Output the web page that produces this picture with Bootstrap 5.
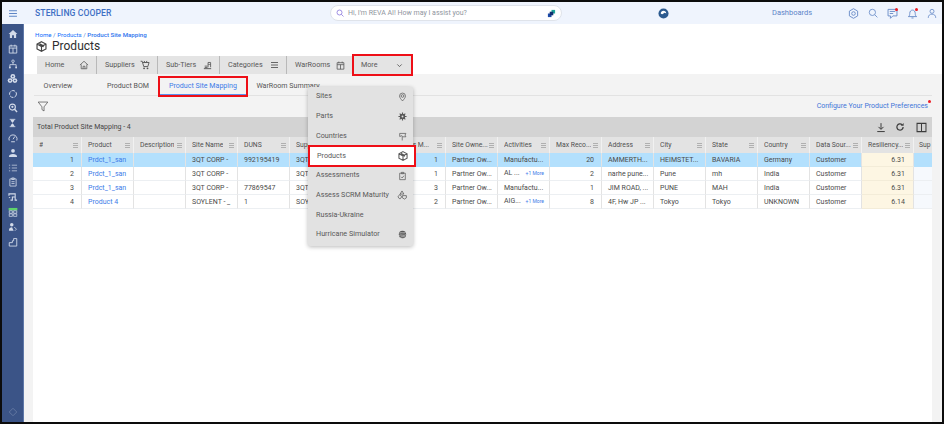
<!DOCTYPE html>
<html lang="en">
<head>
<meta charset="utf-8">
<title>Products</title>
<link href="https://cdn.jsdelivr.net/npm/bootstrap@5.3.0/dist/css/bootstrap.min.css" rel="stylesheet">
<style>
html,body{margin:0;height:424px;overflow:hidden;background:#f7f7f7;font-family:Roboto,"Liberation Sans",sans-serif;color:#4a4a4a}
svg{display:block;flex:none}
a{text-decoration:none}
.app-frame{width:944px;height:424px;border:2px solid #0c0c0c;overflow:hidden;background:#fff}
.top-strip{height:22px;background:#eff4fd}
.burger-cell{width:22px;color:#5f86c6}
.brand-name{width:108px;margin-left:11px;font-size:8.6px;font-weight:500;color:#3f6fc4;letter-spacing:.1px;white-space:nowrap}
.ai-search{width:232px;height:16px;margin-left:187px;padding:0 5px;background:#fff;border:1px solid #dfe3ea;border-radius:8px;font-size:7px;color:#8f959e}
.ai-logo{margin-left:96px;width:12px}
.dash-link{width:40px;margin-left:102px;font-size:7.5px;color:#5d84c8;white-space:nowrap}
.top-icons{margin-left:36px;gap:9px;color:#6d8fc9}
.badge-wrap{position:relative;width:11px;height:11px}
.red-dot{position:absolute;width:3px;height:3px;background:#ec1c24;border-radius:50%;right:0;top:0}
.side-rail{width:22px;background:#3b5487;border-right:1px solid #5f78a8;padding-top:3px;color:#d3dbea;overflow:hidden}
.rail-icon{height:14.8px;width:100%}
.rail-low{margin-top:auto;opacity:.28;padding-bottom:6px}
.page-head{height:50px;padding:8px 0 0 11px;background:#fff}
.crumbs{height:7px;line-height:7px;font-size:6.15px;color:#4f7fd8;white-space:nowrap}
.crumbs b{font-weight:500;color:#2e73ee}
.page-title{height:15px;font-size:12px;line-height:15px;color:#2e2e2e;gap:5px;padding-left:1px}
.main-tabs{height:18px;margin:2px 0 0 2px}
.main-tab{height:18px;background:#e4e4e4;border-right:1px solid #b9b9b9;padding:0 7px 0 8px;font-size:7.2px;color:#575757;white-space:nowrap}
.main-tab.mt-more{width:57px;margin-left:2px;border:0;outline:2px solid #ee0f17;padding:0 8px 0 7px;position:relative;z-index:3}
.gray-zone{background:#f3f3f3}
.sub-tabs{height:18px;margin:4px 0 0 10px;width:898px;border-bottom:1px solid #e2e2e2}
.sub-tab{height:18px;font-size:7.1px;color:#555;border-bottom:1px solid #e2e2e2;white-space:nowrap}
.sub-tab.st-first{padding-right:12px;margin-right:4px}
.sub-tab.st-on{outline:2px solid #ee0f17;outline-offset:0;color:#3d7be8;margin:0 4px 0 2px;height:17px;border-bottom:1px solid #5b90ee;position:relative}
.filter-row{height:21px;margin-left:13px;width:895px;padding-right:4px}
.pref-link{position:relative;font-size:7px;color:#3f76d8;white-space:nowrap}
.pref-link i{position:absolute;top:-1px;right:-3px;width:3px;height:3px;background:#ec1c24;border-radius:50%}
.grid-pane{margin-left:9px;width:899px;background:#fff}
.grid-bar{height:20px;background:#d3d3d3;padding:0 5px 0 4px;font-size:7px;color:#444}
.grid-tools{gap:9px;color:#3c3c3c}
.grid-tools svg:last-child{margin-left:2px}
.site-grid{table-layout:fixed;width:899px;border-collapse:separate;border-spacing:0;margin:0}
.site-grid th,.site-grid td{padding:0 4px 0 6px;font-size:7px;font-weight:400;white-space:nowrap;overflow:hidden;color:#4a4a4a;border-right:1.5px solid #e3e3e3;border-bottom:1px solid #eceff2;text-overflow:ellipsis;background:#fff;vertical-align:middle}
.site-grid th{height:16px;font-size:6.8px;padding-right:3px;background:#e3e3e3;border-right:1.5px solid #f1f1f1;border-bottom:0;color:#505050}
.site-grid th.th-last{text-overflow:clip;padding-left:5px;padding-right:0;border-right:0}
.site-grid td{height:14px;line-height:12px}
.site-grid td.td-last{background:#f6f9fd;border-right:0}
.head-cell{justify-content:space-between;gap:1px}
.head-cell span{overflow:hidden;text-overflow:ellipsis}
.head-lines{width:5px;height:5px;flex:none;border-top:1px solid #b0b0b0;border-bottom:1px solid #b0b0b0;position:relative}
.head-lines::after{content:"";position:absolute;left:0;right:0;top:1px;height:1px;background:#b0b0b0}
.site-grid td.num{text-align:right;padding-right:7px}
.site-grid td a{color:#3d7be8}
.site-grid tr.row-on td,.site-grid tr.row-on td.td-last{background:#b3e0fd;border-bottom-color:#b3e0fd}
.site-grid td.resil,.site-grid tr.row-on td.resil{background:#fdf6e3;border-bottom-color:#f3ecd8;text-align:right;padding-right:8px}
.more-tag{font-size:5px;color:#3d7be8;float:right;line-height:13px;margin-right:1px}
.more-wrap{position:relative}
.more-menu.dropdown-menu{position:absolute;display:block;left:-44px;top:31px;width:105px;min-width:0;height:159px;padding:0;margin:0;border:0;border-radius:2px;background:#e2e2e2;box-shadow:0 1px 4px rgba(0,0,0,.28);z-index:2}
.more-menu .dropdown-item{height:19.7px;padding:0 6px 0 8px;font-size:7.2px;color:#585858;white-space:nowrap;position:relative}
.more-menu .dropdown-item.mi-on{background:#fff;outline:2px solid #ee0f17;outline-offset:-1px;width:106px;margin-left:1px;padding:0 7px 0 8px}
</style>
</head>
<body>
<svg width="0" height="0" style="position:absolute">
<defs>
<symbol id="i-cube" viewBox="0 0 16 16"><path d="M8 1 14.500 4.500V11.500L8 15 1.500 11.500V4.500Z M1.500 4.500 8 8 14.500 4.500 M8 8V15" fill="none" stroke="currentColor" stroke-width="1.700"/><path d="M4.800 2.800 11.200 6.200 11.200 9 8 8 4.800 6.200Z" fill="currentColor"/></symbol>
<symbol id="i-home" viewBox="0 0 16 16"><path d="M1.500 8 8 2l6.500 6M3.500 7v7h9V7M6.500 14v-4h3v4" fill="none" stroke="currentColor" stroke-width="1.200"/></symbol>
<symbol id="i-homefill" viewBox="0 0 16 16"><path d="M8 1.500 15 8h-2v6.500H9.500V10h-3v4.500H3V8H1Z" fill="currentColor"/></symbol>
<symbol id="i-cal" viewBox="0 0 16 16"><path d="M2 3h12v11.500H2ZM2 6.500h12M5 1v3M11 1v3M8 6.500v8" fill="none" stroke="currentColor" stroke-width="1.400"/></symbol>
<symbol id="i-org" viewBox="0 0 16 16"><circle cx="8" cy="3.500" r="2" fill="none" stroke="currentColor" stroke-width="1.300"/><path d="M8 5.500V9M3 13V9h10v4" fill="none" stroke="currentColor" stroke-width="1.300"/><circle cx="3" cy="13.500" r="1.500" fill="currentColor"/><circle cx="13" cy="13.500" r="1.500" fill="currentColor"/></symbol>
<symbol id="i-bio" viewBox="0 0 16 16"><circle cx="8.500" cy="5" r="3.500" fill="currentColor"/><circle cx="4.500" cy="11" r="3.500" fill="currentColor"/><circle cx="11.500" cy="11" r="3.500" fill="currentColor"/><circle cx="4.500" cy="11" r="1.200" fill="#3b5487"/><circle cx="11.500" cy="11" r="1.200" fill="#3b5487"/><circle cx="8.500" cy="5" r="1.200" fill="#3b5487"/></symbol>
<symbol id="i-ring" viewBox="0 0 16 16"><circle cx="8" cy="8" r="5.500" fill="none" stroke="currentColor" stroke-width="1.600" stroke-dasharray="6 1.600"/></symbol>
<symbol id="i-searchuser" viewBox="0 0 16 16"><circle cx="7" cy="6.500" r="4.800" fill="none" stroke="currentColor" stroke-width="1.800"/><circle cx="7" cy="6" r="1.800" fill="currentColor"/><path d="M10.500 10 14.500 14.500" stroke="currentColor" stroke-width="2.200"/></symbol>
<symbol id="i-hour" viewBox="0 0 16 16"><path d="M3 1.500h10M3 14.500h10" stroke="currentColor" stroke-width="1.500"/><path d="M4.500 2h7c0 3-3.500 4.500-3.500 6s3.500 3 3.500 6h-7c0-3 3.500-4.500 3.500-6S4.500 5 4.500 2Z" fill="currentColor"/></symbol>
<symbol id="i-gauge" viewBox="0 0 16 16"><path d="M2 12a6.500 6.500 0 1 1 12 0" fill="none" stroke="currentColor" stroke-width="1.500"/><path d="M8 10 11 5.500M5 14h6" stroke="currentColor" stroke-width="1.500"/></symbol>
<symbol id="i-usercard" viewBox="0 0 16 16"><circle cx="8" cy="4.500" r="3" fill="currentColor"/><path d="M1.500 14.500c0-4 2.500-5 6.500-5s6.500 1 6.500 5Z" fill="currentColor"/></symbol>
<symbol id="i-list" viewBox="0 0 16 16"><path d="M1.500 3.500h2M6 3.500h8.500M1.500 8h2M6 8h8.500M1.500 12.500h2M6 12.500h8.500" stroke="currentColor" stroke-width="1.500" opacity=".75"/></symbol>
<symbol id="i-clip" viewBox="0 0 16 16"><path d="M3 3h10v11.500H3ZM6 1.500h4V4H6ZM5.500 7.500h5M5.500 10.500h5" fill="none" stroke="currentColor" stroke-width="1.300"/></symbol>
<symbol id="i-clipcheck" viewBox="0 0 16 16"><path d="M3 3h10v11.500H3ZM6 1.500h4V4H6ZM5.500 9.500 7.500 11.500 10.500 7.500" fill="none" stroke="currentColor" stroke-width="1.300"/></symbol>
<symbol id="i-swap" viewBox="0 0 16 16"><path d="M1.500 6V3h10v10h3M11.500 8H7v5H4" fill="none" stroke="currentColor" stroke-width="1.700"/><path d="M1 8h3l-1.500 2Z" fill="currentColor"/></symbol>
<symbol id="i-shop" viewBox="0 0 16 16"><path d="M1 1.500h14v4H1Z" fill="#5fd36b"/><path d="M2 6h5v4H2ZM9 6h5v4H9ZM2 11h5v4H2ZM9 11h5v4H9Z" fill="none" stroke="currentColor" stroke-width="1.200"/></symbol>
<symbol id="i-person" viewBox="0 0 16 16"><circle cx="6" cy="4.500" r="2.800" fill="currentColor"/><path d="M1.500 14c0-4 2-5.500 5-5.500L9 14Z" fill="currentColor"/><path d="M10 8l3.500 3.500-2.500 2.500" fill="none" stroke="currentColor" stroke-width="1.300"/></symbol>
<symbol id="i-steps" viewBox="0 0 16 16"><path d="M2 14.500V9h5V6h2V2.500h5v12Z" fill="none" stroke="currentColor" stroke-width="1.400"/></symbol>
<symbol id="i-diamond" viewBox="0 0 16 16"><path d="M8 2 14 8 8 14 2 8Z" fill="none" stroke="currentColor" stroke-width="1.400"/></symbol>
<symbol id="i-cart" viewBox="0 0 16 16"><path d="M1 2h2.500L6 10.500h6.500L14.500 4H4.500M6.500 1.500 8 4M11 1.500 10 4" fill="none" stroke="currentColor" stroke-width="1.500"/><circle cx="6.500" cy="13.300" r="1.500" fill="currentColor"/><circle cx="12" cy="13.300" r="1.500" fill="currentColor"/></symbol>
<symbol id="i-tier" viewBox="0 0 16 16"><path d="M1.500 14.500h13" stroke="currentColor" stroke-width="1.700"/><path d="M3 12.500h5M3 10h5" stroke="currentColor" stroke-width="1.500"/><path d="M9 12V3.500h4.500V12" fill="none" stroke="currentColor" stroke-width="1.500"/><path d="M9 7h4.500" stroke="currentColor" stroke-width="1.200"/></symbol>
<symbol id="i-bars" viewBox="0 0 16 16"><path d="M1 3h14M1 8h14M1 13h14" stroke="currentColor" stroke-width="1.800"/></symbol>
<symbol id="i-chev" viewBox="0 0 16 16"><path d="M3 5.500 8 10.500 13 5.500" fill="none" stroke="currentColor" stroke-width="2"/></symbol>
<symbol id="i-funnel" viewBox="0 0 16 16"><path d="M1 1.500h14L9.500 8.500v6l-3-2v-4Z" fill="none" stroke="currentColor" stroke-width="1.100"/></symbol>
<symbol id="i-down" viewBox="0 0 16 16"><path d="M8 1v9.500M4 7l4 4 4-4M2 14.500h12" fill="none" stroke="currentColor" stroke-width="1.600"/></symbol>
<symbol id="i-refresh" viewBox="0 0 16 16"><path d="M13 8a5 5 0 1 1-1.600-3.700" fill="none" stroke="currentColor" stroke-width="2"/><path d="M13.800 1.500v4.500H9.300Z" fill="currentColor"/></symbol>
<symbol id="i-cols" viewBox="0 0 16 16"><path d="M1.500 2h13v12h-13ZM8 2v12" fill="none" stroke="currentColor" stroke-width="1.500"/></symbol>
<symbol id="i-gear" viewBox="0 0 16 16"><path d="M8 1 14 4.500v7L8 15 2 11.500v-7Z" fill="none" stroke="currentColor" stroke-width="1.400"/><circle cx="8" cy="8" r="2.600" fill="none" stroke="currentColor" stroke-width="1.400"/></symbol>
<symbol id="i-mag" viewBox="0 0 16 16"><circle cx="7" cy="7" r="5" fill="none" stroke="currentColor" stroke-width="1.400"/><path d="M10.800 10.800 15 15" stroke="currentColor" stroke-width="1.400"/></symbol>
<symbol id="i-chat" viewBox="0 0 16 16"><path d="M1.500 2h13v9.500h-6L5 15v-3.500H1.500ZM4 5h8M4 8h5" fill="none" stroke="currentColor" stroke-width="1.400"/></symbol>
<symbol id="i-bell" viewBox="0 0 16 16"><path d="M2 12.500c1.500-1 2-2 2-4.500 0-3 1.700-5 4-5s4 2 4 5c0 2.500.5 3.500 2 4.500ZM6.500 14.500h3" fill="none" stroke="currentColor" stroke-width="1.400"/></symbol>
<symbol id="i-user" viewBox="0 0 16 16"><circle cx="8" cy="4.500" r="3.200" fill="none" stroke="currentColor" stroke-width="1.400"/><path d="M2 15c0-4 2.500-6 6-6s6 2 6 6" fill="none" stroke="currentColor" stroke-width="1.400"/></symbol>
<symbol id="i-pin" viewBox="0 0 16 16"><path d="M8 15C5 11.500 2.800 9 2.800 6.200a5.200 5.200 0 0 1 10.400 0C13.200 9 11 11.500 8 15Z" fill="none" stroke="currentColor" stroke-width="1.300"/><circle cx="8" cy="6.200" r="2.400" fill="none" stroke="currentColor" stroke-width="1.300"/></symbol>
<symbol id="i-part" viewBox="0 0 16 16"><circle cx="8" cy="8" r="4.800" fill="currentColor"/><path d="M8 .8v14.400M.8 8h14.400M3 3l10 10M13 3 3 13" stroke="currentColor" stroke-width="2"/><circle cx="8" cy="8" r="1.700" fill="#e2e2e2"/></symbol>
<symbol id="i-flag" viewBox="0 0 16 16"><path d="M3 2.500h11l-1.500 3 1.500 3H8L7 6.500 3 8ZM7.500 8.500V15" fill="none" stroke="currentColor" stroke-width="1.300"/></symbol>
<symbol id="i-assess" viewBox="0 0 16 16"><path d="M8 1.500 11 6.500H5ZM1.500 11l3-4 3 4-3 3.500ZM8.500 9h6.500v3.500l-3 2-3.500-2Z" fill="none" stroke="currentColor" stroke-width="1.200"/></symbol>
<symbol id="i-storm" viewBox="0 0 16 16"><circle cx="8" cy="8" r="6.500" fill="currentColor"/><path d="M2.500 5.500C7 4 10 6 13.500 4.500M2 9.500c4-2 8 1.500 12-1M4 13c3-1.500 5-1 8-1" fill="none" stroke="#e2e2e2" stroke-width="1.200"/></symbol>
</defs>
</svg>

<div class="app-frame d-flex flex-column">
  <header class="top-strip d-flex align-items-center flex-none">
    <div class="burger-cell d-flex justify-content-center"><svg width="10" height="9"><use href="#i-bars"/></svg></div>
    <div class="brand-name">STERLING COOPER</div>
    <div class="ai-search d-flex align-items-center gap-1">
      <svg width="8" height="8" style="color:#7a63d8"><use href="#i-mag"/></svg>
      <span class="flex-grow-1">Hi, I'm REVA AI! How may I assist you?</span>
      <svg width="9" height="9" viewBox="0 0 10 10"><path d="M5 1h4v4H5Z" fill="#1fa59a"/><path d="M1 5h4v4H1Z" fill="#1c4aa8"/><path d="M3 3h4v4H3Z" fill="#12306f"/></svg>
    </div>
    <div class="ai-logo"><svg width="11" height="11" viewBox="0 0 12 12"><circle cx="6" cy="6" r="5.500" fill="#2c5a8f"/><path d="M3 6c0-2 1.500-3 3-3s3 1 3 3c-1.500-1-2-1-3 0s-2 1-3 0Z" fill="#fff"/></svg></div>
    <a class="dash-link" href="#">Dashboards</a>
    <div class="top-icons d-flex align-items-center">
      <svg width="11" height="11"><use href="#i-gear"/></svg>
      <svg width="10" height="10"><use href="#i-mag"/></svg>
      <span class="badge-wrap"><svg width="11" height="11"><use href="#i-chat"/></svg><i class="red-dot"></i></span>
      <span class="badge-wrap"><svg width="11" height="11"><use href="#i-bell"/></svg><i class="red-dot"></i></span>
      <svg width="10" height="11"><use href="#i-user"/></svg>
    </div>
  </header>

  <div class="d-flex flex-grow-1" style="min-height:0">
    <nav class="side-rail d-flex flex-column flex-none">
      <div class="rail-icon d-flex align-items-center justify-content-center"><svg width="10" height="10"><use href="#i-homefill"/></svg></div>
      <div class="rail-icon d-flex align-items-center justify-content-center"><svg width="10" height="10"><use href="#i-cal"/></svg></div>
      <div class="rail-icon d-flex align-items-center justify-content-center"><svg width="10" height="10"><use href="#i-org"/></svg></div>
      <div class="rail-icon d-flex align-items-center justify-content-center"><svg width="11" height="11"><use href="#i-bio"/></svg></div>
      <div class="rail-icon d-flex align-items-center justify-content-center"><svg width="10" height="10"><use href="#i-ring"/></svg></div>
      <div class="rail-icon d-flex align-items-center justify-content-center"><svg width="10" height="10"><use href="#i-searchuser"/></svg></div>
      <div class="rail-icon d-flex align-items-center justify-content-center"><svg width="9" height="10"><use href="#i-hour"/></svg></div>
      <div class="rail-icon d-flex align-items-center justify-content-center"><svg width="10" height="10"><use href="#i-gauge"/></svg></div>
      <div class="rail-icon d-flex align-items-center justify-content-center"><svg width="10" height="10"><use href="#i-usercard"/></svg></div>
      <div class="rail-icon d-flex align-items-center justify-content-center"><svg width="10" height="10"><use href="#i-list"/></svg></div>
      <div class="rail-icon d-flex align-items-center justify-content-center"><svg width="10" height="10"><use href="#i-clip"/></svg></div>
      <div class="rail-icon d-flex align-items-center justify-content-center"><svg width="10" height="10"><use href="#i-swap"/></svg></div>
      <div class="rail-icon d-flex align-items-center justify-content-center"><svg width="10" height="10"><use href="#i-shop"/></svg></div>
      <div class="rail-icon d-flex align-items-center justify-content-center"><svg width="10" height="10"><use href="#i-person"/></svg></div>
      <div class="rail-icon d-flex align-items-center justify-content-center"><svg width="10" height="10"><use href="#i-steps"/></svg></div>
      <div class="rail-icon rail-low d-flex align-items-center justify-content-center"><svg width="10" height="10"><use href="#i-diamond"/></svg></div>
    </nav>

    <main class="flex-grow-1 d-flex flex-column" style="min-width:0">
      <section class="page-head">
        <div class="crumbs"><a href="#">Home</a> / <a href="#">Products</a> / <b>Product Site Mapping</b></div>
        <div class="page-title d-flex align-items-center"><svg width="11" height="11" style="color:#444"><use href="#i-cube"/></svg><span>Products</span></div>
        <div class="main-tabs d-flex">
          <div class="main-tab d-flex align-items-center justify-content-between" style="width:60px"><span>Home</span><svg width="10" height="10"><use href="#i-home"/></svg></div>
          <div class="main-tab d-flex align-items-center justify-content-between" style="width:61px"><span>Suppliers</span><svg width="10" height="10"><use href="#i-cart"/></svg></div>
          <div class="main-tab d-flex align-items-center justify-content-between" style="width:62px"><span>Sub-Tiers</span><svg width="9" height="10"><use href="#i-tier"/></svg></div>
          <div class="main-tab d-flex align-items-center justify-content-between" style="width:67px"><span>Categories</span><svg width="9" height="8"><use href="#i-bars"/></svg></div>
          <div class="main-tab d-flex align-items-center justify-content-between" style="width:65px;border-right:0"><span>WarRooms</span><svg width="9" height="9"><use href="#i-cal"/></svg></div>
          <div class="more-wrap">
            <div class="main-tab mt-more d-flex align-items-center justify-content-between"><span>More</span><svg width="7" height="7"><use href="#i-chev"/></svg></div>
            <div class="dropdown-menu more-menu">
              <a class="dropdown-item d-flex align-items-center justify-content-between" href="#"><span>Sites</span><svg width="9" height="10"><use href="#i-pin"/></svg></a>
              <a class="dropdown-item d-flex align-items-center justify-content-between" href="#"><span>Parts</span><svg width="9" height="9"><use href="#i-part"/></svg></a>
              <a class="dropdown-item d-flex align-items-center justify-content-between" href="#"><span>Countries</span><svg width="9" height="9"><use href="#i-flag"/></svg></a>
              <a class="dropdown-item mi-on d-flex align-items-center justify-content-between" href="#"><span>Products</span><svg width="10" height="10"><use href="#i-cube"/></svg></a>
              <a class="dropdown-item d-flex align-items-center justify-content-between" href="#"><span>Assessments</span><svg width="9" height="10"><use href="#i-clipcheck"/></svg></a>
              <a class="dropdown-item d-flex align-items-center justify-content-between" href="#"><span>Assess SCRM Maturity</span><svg width="10" height="10"><use href="#i-assess"/></svg></a>
              <a class="dropdown-item d-flex align-items-center justify-content-between" href="#"><span>Russia-Ukraine</span></a>
              <a class="dropdown-item d-flex align-items-center justify-content-between" href="#"><span>Hurricane Simulator</span><svg width="9" height="9"><use href="#i-storm"/></svg></a>
            </div>
          </div>
        </div>
      </section>

      <section class="gray-zone flex-grow-1 d-flex flex-column" style="min-height:0">
        <div class="sub-tabs d-flex">
          <div class="sub-tab st-first d-flex align-items-center justify-content-center" style="width:60px">Overview</div>
          <div class="sub-tab d-flex align-items-center justify-content-center" style="width:60px">Product BOM</div>
          <div class="sub-tab st-on d-flex align-items-center justify-content-center" style="width:86px">Product Site Mapping</div>
          <div class="sub-tab d-flex align-items-center justify-content-center" style="width:76px">WarRoom Summary</div>
        </div>
        <div class="filter-row d-flex align-items-center justify-content-between">
          <svg width="12" height="11" style="color:#555"><use href="#i-funnel"/></svg>
          <a class="pref-link" href="#">Configure Your Product Preferences<i></i></a>
        </div>
        <div class="grid-pane flex-grow-1">
          <div class="grid-bar d-flex align-items-center justify-content-between">
            <span>Total Product Site Mapping - 4</span>
            <div class="grid-tools d-flex align-items-center">
              <svg width="10" height="11"><use href="#i-down"/></svg>
              <svg width="10" height="10"><use href="#i-refresh"/></svg>
              <svg width="11" height="11"><use href="#i-cols"/></svg>
            </div>
          </div>
          <table class="site-grid">
            <colgroup><col style="width:49px"><col span="16" style="width:52px"><col style="width:18px"></colgroup>
            <thead><tr>
              <th><div class="head-cell d-flex align-items-center"><span>#</span><i class="head-lines"></i></div></th>
              <th><div class="head-cell d-flex align-items-center"><span>Product</span><i class="head-lines"></i></div></th>
              <th><div class="head-cell d-flex align-items-center"><span>Description</span><i class="head-lines"></i></div></th>
              <th><div class="head-cell d-flex align-items-center"><span>Site Name</span><i class="head-lines"></i></div></th>
              <th><div class="head-cell d-flex align-items-center"><span>DUNS</span><i class="head-lines"></i></div></th>
              <th><div class="head-cell d-flex align-items-center"><span>Supplier</span><i class="head-lines"></i></div></th>
              <th><div class="head-cell d-flex align-items-center"><span>Tier</span><i class="head-lines"></i></div></th>
              <th><div class="head-cell d-flex align-items-center"><span>Parts M...</span><i class="head-lines"></i></div></th>
              <th><div class="head-cell d-flex align-items-center"><span>Site Owne...</span><i class="head-lines"></i></div></th>
              <th><div class="head-cell d-flex align-items-center"><span>Activities</span><i class="head-lines"></i></div></th>
              <th><div class="head-cell d-flex align-items-center"><span>Max Reco...</span><i class="head-lines"></i></div></th>
              <th><div class="head-cell d-flex align-items-center"><span>Address</span><i class="head-lines"></i></div></th>
              <th><div class="head-cell d-flex align-items-center"><span>City</span><i class="head-lines"></i></div></th>
              <th><div class="head-cell d-flex align-items-center"><span>State</span><i class="head-lines"></i></div></th>
              <th><div class="head-cell d-flex align-items-center"><span>Country</span><i class="head-lines"></i></div></th>
              <th><div class="head-cell d-flex align-items-center"><span>Data Sour...</span><i class="head-lines"></i></div></th>
              <th><div class="head-cell d-flex align-items-center"><span>Resiliency...</span><i class="head-lines"></i></div></th>
              <th class="th-last">Sup</th>
            </tr></thead>
            <tbody>
              <tr class="row-on"><td class="num">1</td><td><a href="#">Prdct_1_san</a></td><td></td><td>3QT CORP -</td><td>992195419</td><td>3QT CORP -</td><td></td><td class="num">1</td><td>Partner Ow...</td><td>Manufactu...</td><td class="num">20</td><td>AMMERTH...</td><td>HEIMSTET...</td><td>BAVARIA</td><td>Germany</td><td>Customer</td><td class="resil">6.31</td><td class="td-last"></td></tr>
              <tr><td class="num">2</td><td><a href="#">Prdct_1_san</a></td><td></td><td>3QT CORP -</td><td></td><td>3QT CORP -</td><td></td><td class="num">1</td><td>Partner Ow...</td><td>AL ...<span class="more-tag">+1 More</span></td><td class="num">2</td><td>narhe pune...</td><td>Pune</td><td>mh</td><td>India</td><td>Customer</td><td class="resil">6.31</td><td class="td-last"></td></tr>
              <tr><td class="num">3</td><td><a href="#">Prdct_1_san</a></td><td></td><td>3QT CORP -</td><td>77869547</td><td>3QT CORP -</td><td></td><td class="num">3</td><td>Partner Ow...</td><td>Manufactu...</td><td class="num">1</td><td>JIM ROAD, ...</td><td>PUNE</td><td>MAH</td><td>India</td><td>Customer</td><td class="resil">6.31</td><td class="td-last"></td></tr>
              <tr><td class="num">4</td><td><a href="#">Product 4</a></td><td></td><td>SOYLENT - _</td><td>1</td><td>SOYLENT</td><td></td><td class="num">2</td><td>Partner Ow...</td><td>AIG...<span class="more-tag">+1 More</span></td><td class="num">8</td><td>4F, Hw JP ...</td><td>Tokyo</td><td>Tokyo</td><td>UNKNOWN</td><td>Customer</td><td class="resil">6.14</td><td class="td-last"></td></tr>
            </tbody>
          </table>
        </div>
      </section>
    </main>
  </div>
</div>
<script src="https://cdn.jsdelivr.net/npm/bootstrap@5.3.0/dist/js/bootstrap.bundle.min.js"></script>
</body>
</html>
